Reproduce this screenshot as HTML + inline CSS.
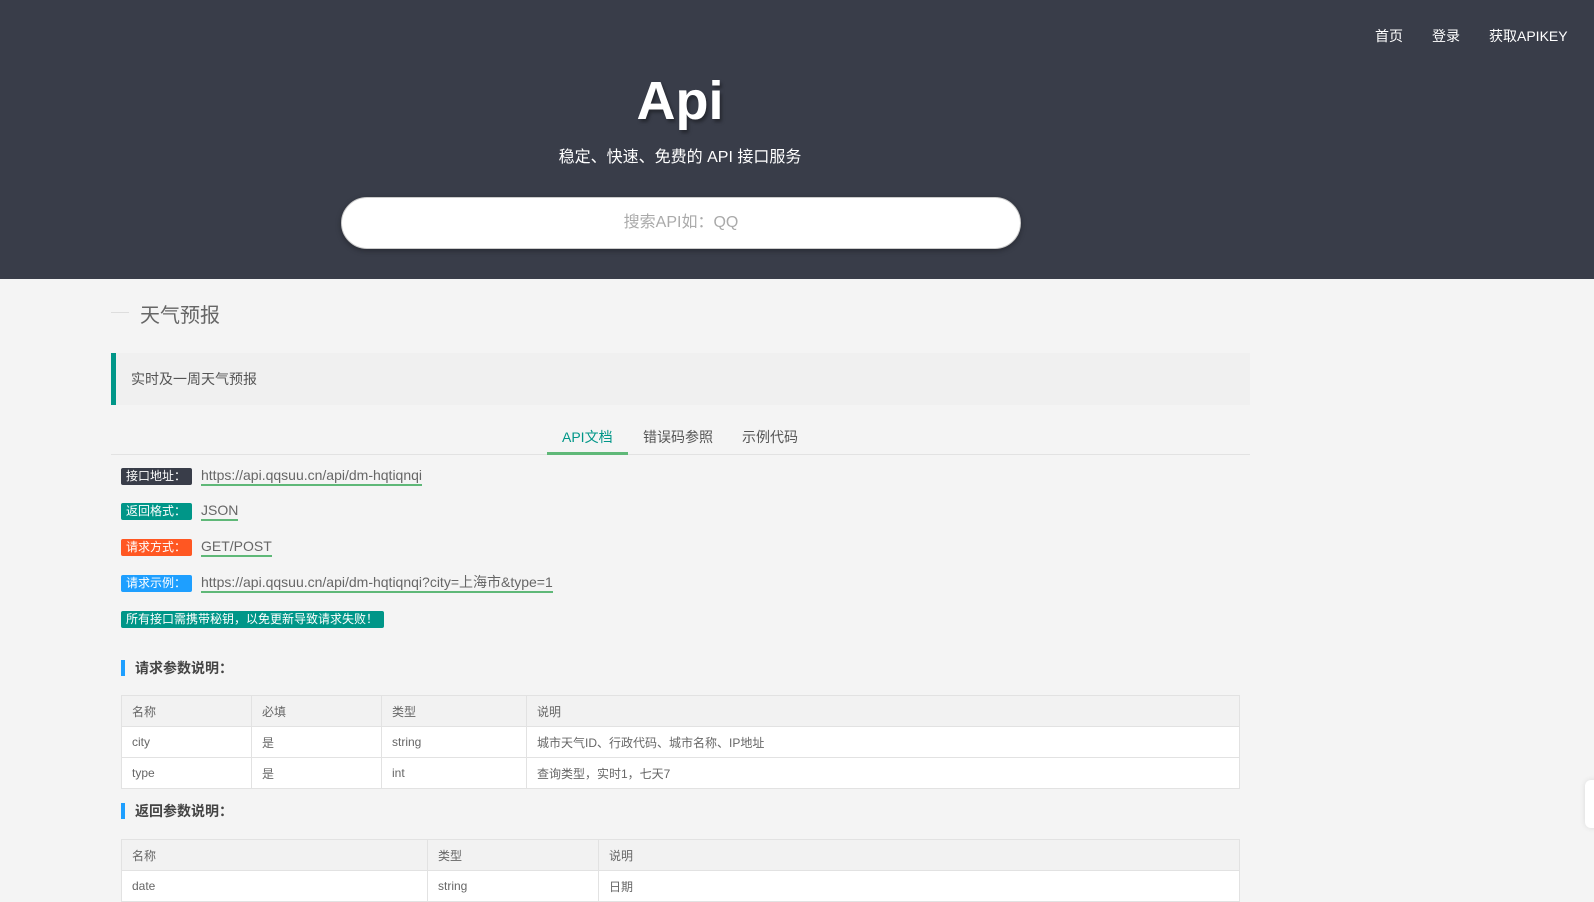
<!DOCTYPE html>
<html><head><meta charset="utf-8"><style>
*{margin:0;padding:0;box-sizing:border-box}
body{width:1594px;height:886px;overflow:hidden;background:#f4f4f4;font-family:"Liberation Sans","Noto Sans CJK SC",sans-serif;color:#666;position:relative}
.hd{position:absolute;left:0;top:0;width:1594px;height:279px;background:#393D49}
.nav{position:absolute;top:26px;font-size:14px;color:#fff}
.title{position:absolute;left:0;width:1360px;top:70px;text-align:center;font-size:54px;font-weight:bold;color:#fff;text-shadow:2px 3px 3px rgba(0,0,0,.35)}
.sub{position:absolute;left:0;width:1360px;top:143px;text-align:center;font-size:16px;color:#fff}
.search{position:absolute;left:341px;top:197px;width:680px;height:52px;background:#fff;border-radius:26px;border:1px solid #ccc;box-shadow:0 2px 6px rgba(0,0,0,.3);text-align:center;line-height:50px;font-size:16px;color:#aaa}
.abs{position:absolute}
.lbl{position:absolute;left:121px;width:71px;height:17px;font-size:12px;color:#fff;line-height:17px;padding-left:5px;border-radius:2px}
.lnk{position:absolute;left:201px;font-size:14px;color:#666;border-bottom:2px solid #5FB878;line-height:17px}
table{position:absolute;left:121px;width:1119px;border-collapse:collapse;font-size:12px;color:#666}
td{border:1px solid #e2e2e2;height:31px;padding-left:10px;background:#fff}
tr.h td{background:#f2f2f2}
.h2{position:absolute;left:121px;font-size:14px;font-weight:bold;color:#444;border-left:4px solid #1E9FFF;padding-left:10px;line-height:16px}
</style></head><body>
<div class="hd">
<div class="nav" style="left:1375px">首页</div>
<div class="nav" style="left:1432px">登录</div>
<div class="nav" style="left:1489px">获取APIKEY</div>
<div class="title">Api</div>
<div class="sub">稳定、快速、免费的 API 接口服务</div>
<div class="search">搜索API如：QQ</div>
</div>
<div class="abs" style="left:111px;top:312px;width:18px;border-top:1px solid #ddd"></div>
<div class="abs" style="left:140px;top:299px;font-size:20px;color:#666">天气预报</div>
<div class="abs" style="left:111px;top:353px;width:1139px;height:52px;background:#f0f0f0;border-left:5px solid #009688;font-size:14px;color:#555;line-height:52px;padding-left:15px">实时及一周天气预报</div>
<div class="abs" style="left:111px;top:454px;width:1139px;border-top:1px solid #e2e2e2"></div>
<div class="abs" style="left:547px;top:452px;width:81px;height:3px;background:#5FB878"></div>
<div class="abs" style="left:562px;top:427px;font-size:14px;color:#009688">API文档</div>
<div class="abs" style="left:643px;top:427px;font-size:14px;color:#555">错误码参照</div>
<div class="abs" style="left:742px;top:427px;font-size:14px;color:#555">示例代码</div>
<div class="lbl" style="top:468px;background:#393D49">接口地址：</div><div class="lnk" style="top:467px">https://api.qqsuu.cn/api/dm-hqtiqnqi</div>
<div class="lbl" style="top:503px;background:#009688">返回格式：</div><div class="lnk" style="top:502px">JSON</div>
<div class="lbl" style="top:539px;background:#FF5722">请求方式：</div><div class="lnk" style="top:538px">GET/POST</div>
<div class="lbl" style="top:575px;background:#1E9FFF">请求示例：</div><div class="lnk" style="top:574px">https://api.qqsuu.cn/api/dm-hqtiqnqi?city=上海市&amp;type=1</div>
<div class="lbl" style="top:611px;width:263px;background:#009688">所有接口需携带秘钥，以免更新导致请求失败！</div>
<div class="h2" style="top:660px">请求参数说明：</div>
<table style="top:695px"><tr class="h"><td style="width:130px">名称</td><td style="width:130px">必填</td><td style="width:145px">类型</td><td>说明</td></tr>
<tr><td>city</td><td>是</td><td>string</td><td>城市天气ID、行政代码、城市名称、IP地址</td></tr>
<tr><td>type</td><td>是</td><td>int</td><td>查询类型，实时1，七天7</td></tr></table>
<div class="h2" style="top:803px">返回参数说明：</div>
<table style="top:839px"><tr class="h"><td style="width:306px">名称</td><td style="width:171px">类型</td><td>说明</td></tr>
<tr><td>date</td><td>string</td><td>日期</td></tr></table>
<div class="abs" style="left:1585px;top:780px;width:20px;height:48px;background:#fff;border-radius:6px;box-shadow:0 0 6px rgba(0,0,0,.1)"></div>
</body></html>
